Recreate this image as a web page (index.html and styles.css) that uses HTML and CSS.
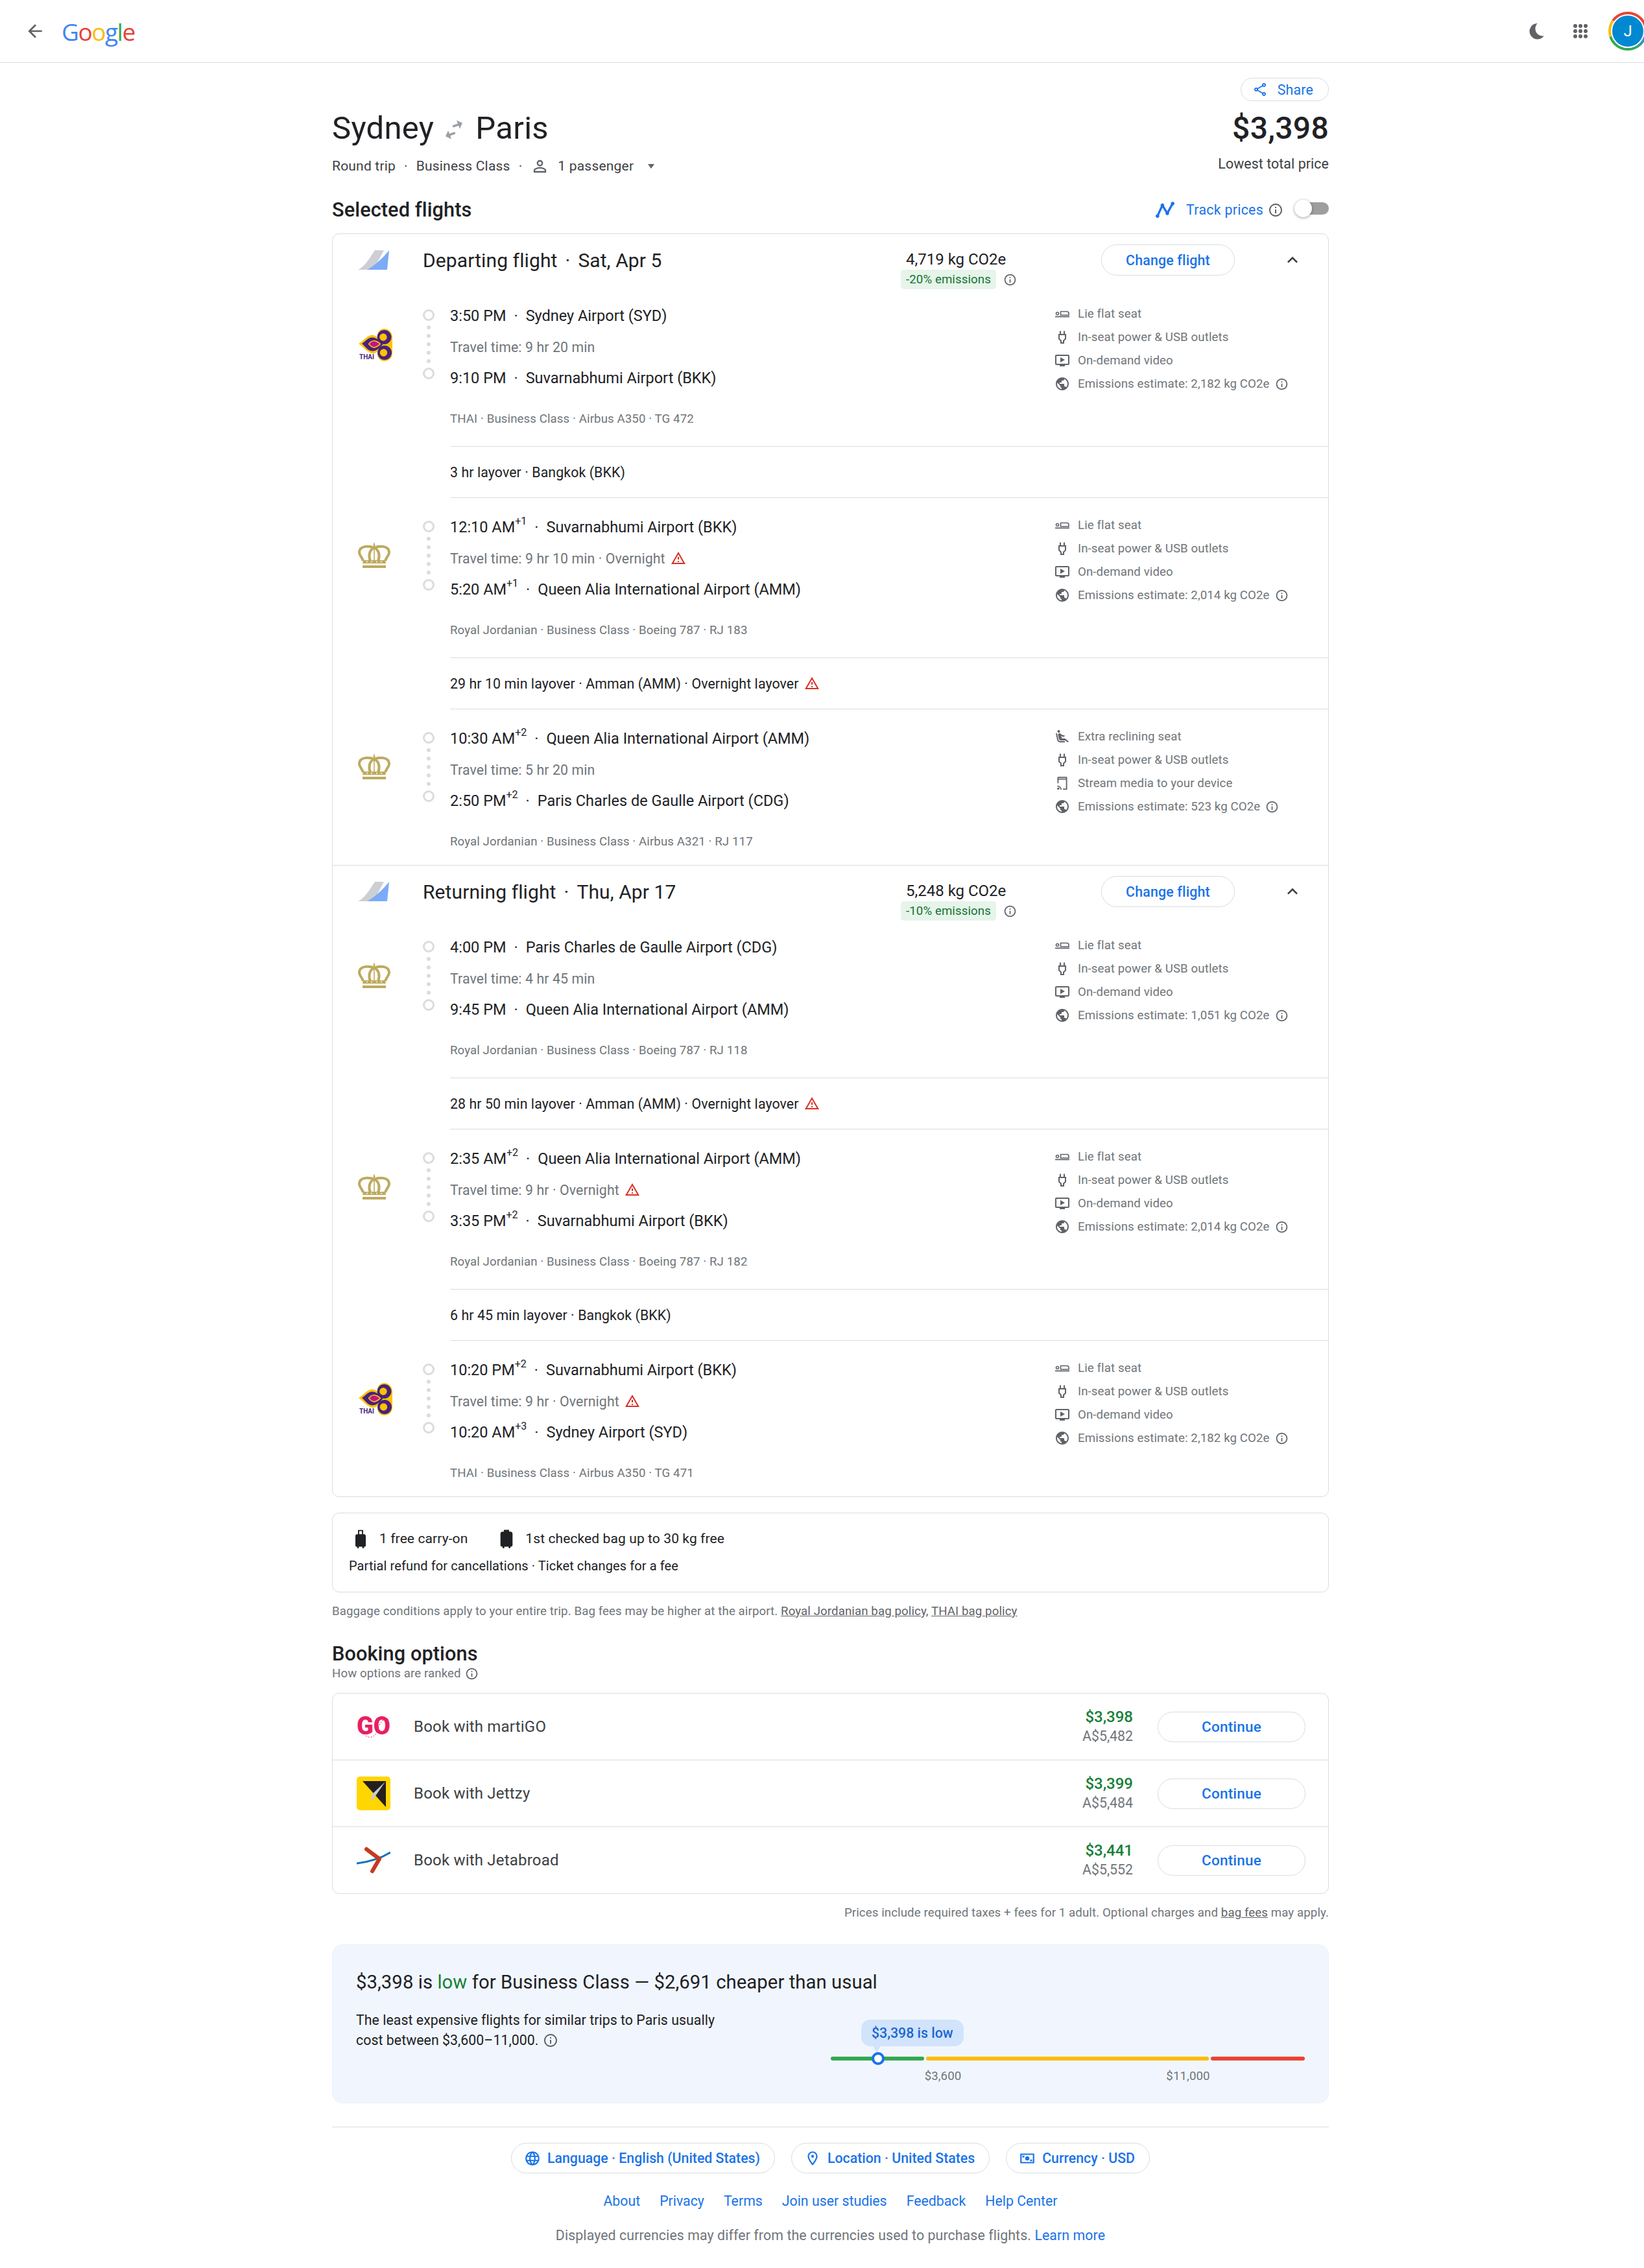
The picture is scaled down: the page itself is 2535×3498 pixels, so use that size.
FILE: index.html
```html
<!DOCTYPE html>
<html lang="en">
<head>
<meta charset="utf-8">
<title>Sydney to Paris - Google Flights</title>
<link rel="stylesheet" href="styles.css">
</head>
<body>
<svg class="defs" width="0" height="0" aria-hidden="true">
  <symbol id="i-back" viewBox="0 0 24 24"><path d="M20 11H7.83l5.59-5.59L12 4l-8 8 8 8 1.41-1.41L7.83 13H20v-2z"/></symbol>
  <symbol id="i-moon" viewBox="0 0 24 24"><path d="M12.5 3a9.2 9.2 0 1 0 7.5 14.6c-5.2.6-9.4-2.6-9.9-7.4-.3-3 .7-5.4 2.4-7.2z"/></symbol>
  <symbol id="i-apps" viewBox="0 0 24 24"><circle cx="4" cy="4" r="3"/><circle cx="12" cy="4" r="3"/><circle cx="20" cy="4" r="3"/><circle cx="4" cy="12" r="3"/><circle cx="12" cy="12" r="3"/><circle cx="20" cy="12" r="3"/><circle cx="4" cy="20" r="3"/><circle cx="12" cy="20" r="3"/><circle cx="20" cy="20" r="3"/></symbol>
  <symbol id="i-person" viewBox="0 0 24 24"><path d="M12 5.9c1.16 0 2.1.94 2.1 2.1s-.94 2.1-2.1 2.1S9.9 9.16 9.9 8s.94-2.1 2.1-2.1m0 9c2.97 0 6.1 1.46 6.1 2.1v1.1H5.9V17c0-.64 3.13-2.1 6.1-2.1M12 4C9.79 4 8 5.79 8 8s1.79 4 4 4 4-1.79 4-4-1.79-4-4-4zm0 9c-2.67 0-8 1.34-8 4v3h16v-3c0-2.66-5.33-4-8-4z"/></symbol>
  <symbol id="i-share" viewBox="0 0 24 24"><path fill-rule="evenodd" d="M18 16.08c-.76 0-1.44.3-1.96.77L8.91 12.7c.05-.23.09-.46.09-.7s-.04-.47-.09-.7l7.05-4.11c.54.5 1.25.81 2.04.81 1.66 0 3-1.34 3-3s-1.34-3-3-3-3 1.34-3 3c0 .24.04.47.09.7L8.04 9.81C7.5 9.31 6.79 9 6 9c-1.66 0-3 1.34-3 3s1.34 3 3 3c.79 0 1.5-.31 2.04-.81l7.12 4.16c-.05.21-.08.43-.08.65 0 1.61 1.31 2.92 2.92 2.92 1.61 0 2.92-1.31 2.92-2.92s-1.31-2.92-2.92-2.92zM18 4c.55 0 1 .45 1 1s-.45 1-1 1-1-.45-1-1 .45-1 1-1zM6 13c-.55 0-1-.45-1-1s.45-1 1-1 1 .45 1 1-.45 1-1 1zm12 7.02c-.55 0-1-.45-1-1s.45-1 1-1 1 .45 1 1-.45 1-1 1z"/></symbol>
  <symbol id="i-track" viewBox="0 0 24 24"><path d="M3.5 19 9 7l5.500 9L20.500 5" fill="none" stroke="currentColor" stroke-width="2.400"/><circle cx="3.500" cy="19" r="2"/><circle cx="9" cy="7" r="2"/><circle cx="14.500" cy="16" r="2"/><circle cx="20.500" cy="5" r="2"/></symbol>
  <symbol id="i-info" viewBox="0 0 24 24"><path d="M11 7h2v2h-2zm0 4h2v6h-2zm1-9C6.48 2 2 6.48 2 12s4.480 10 10 10 10-4.480 10-10S17.520 2 12 2zm0 18c-4.410 0-8-3.590-8-8s3.590-8 8-8 8 3.590 8 8-3.590 8-8 8z"/></symbol>
  <symbol id="i-up" viewBox="0 0 24 24"><path d="M12 8l-6 6 1.410 1.410L12 10.830l4.590 4.580L18 14z"/></symbol>
  <symbol id="i-warn" viewBox="0 0 24 24"><path d="M12 5.990 19.530 19H4.470L12 5.990M12 2 1 21h22L12 2zm1 14h-2v2h2v-2zm0-6h-2v4h2v-4z"/></symbol>
  <symbol id="i-swap" viewBox="0 0 24 24"><g transform="rotate(-20 12 12)"><path d="M21 9l-4-4v3h-5v2h5v3l4-4zM3 15l4 4v-3h5v-2H7v-3l-4 4z"/></g></symbol>
  <symbol id="i-seat" viewBox="0 0 24 24"><path d="M1 15.500h22v1.800H1z"/><circle cx="4.500" cy="11.500" r="2" fill="none" stroke="currentColor" stroke-width="1.600"/><path d="M9.500 14V8.500h9.500c2 0 3 1.300 3 2.800V14z" fill="none" stroke="currentColor" stroke-width="1.600"/></symbol>
  <symbol id="i-plug" viewBox="0 0 24 24"><path d="M9 2.500v5M15 2.500v5M7 8h10v6.500l-3 3V21h-4v-3.500l-3-3z" fill="none" stroke="currentColor" stroke-width="2"/></symbol>
  <symbol id="i-video" viewBox="0 0 24 24"><path d="M21 3H3c-1.110 0-2 .890-2 2v12c0 1.100.890 2 2 2h5v2h8v-2h5c1.100 0 1.990-.900 1.990-2L23 5c0-1.110-.900-2-2-2zm0 14H3V5h18v12zM16 11l-7 4V7z"/></symbol>
  <symbol id="i-globe" viewBox="0 0 24 24"><path d="M12 2C6.480 2 2 6.480 2 12s4.480 10 10 10 10-4.480 10-10S17.520 2 12 2zm-1 17.930c-3.950-.490-7-3.850-7-7.930 0-.620.080-1.210.210-1.790L9 15v1c0 1.100.900 2 2 2v1.930zm6.900-2.540c-.260-.810-1-1.390-1.900-1.390h-1v-3c0-.550-.450-1-1-1H8v-2h2c.550 0 1-.450 1-1V7h2c1.100 0 2-.900 2-2v-.410c2.930 1.190 5 4.060 5 7.410 0 2.080-.800 3.970-2.100 5.390z"/></symbol>
  <symbol id="i-recline" viewBox="0 0 24 24"><path d="M5.350 5.640c-.900-.640-1.120-1.880-.490-2.790.630-.900 1.880-1.120 2.790-.490.900.640 1.120 1.880.490 2.790-.640.900-1.880 1.120-2.790.490zM16 19H8.930c-1.480 0-2.740-1.080-2.960-2.540L4 7H2l1.990 9.760C4.370 19.200 6.470 21 8.940 21H16v-2zm.230-4h-4.880l-1.030-4.100c1.580.890 3.280 1.540 5.150 1.220V9.990c-1.630.310-3.440-.270-4.690-1.250L9.140 7.470c-.230-.180-.490-.300-.760-.380-.320-.090-.660-.120-.990-.060h-.020c-1.230.220-2.050 1.390-1.840 2.610l1.350 5.920C7.160 16.980 8.390 18 9.830 18h6.850l3.820 3 1.500-1.500-5.770-4.500z"/></symbol>
  <symbol id="i-stream" viewBox="0 0 24 24"><path d="M6 2h12c.800 0 1.500.700 1.500 1.500V22H13v-1.800h4.700V6.500H6.300V12H4.500V3.500C4.500 2.700 5.200 2 6 2zM6.300 3.800v1h11.400v-1z"/><circle cx="5.800" cy="20.300" r="1.700"/><path d="M4.500 16a6 6 0 0 1 6 6H12a7.500 7.500 0 0 0-7.500-7.500zM4.500 12.600V14a8 8 0 0 1 8 8h-2" fill="none"/><path d="M4.500 15.500v1.700a4.800 4.800 0 0 1 4.800 4.800H11a6.500 6.500 0 0 0-6.500-6.500z"/></symbol>
  <symbol id="i-carry" viewBox="0 0 24 24"><path d="M8 7h8c1.100 0 2 .900 2 2v11c0 .800-.500 1.300-1.200 1.300H7.200C6.500 21.300 6 20.800 6 20V9c0-1.100.900-2 2-2zM9 7V2h6v5h-1.400V3.400h-3.200V7zM8 21.300h2V23H8zM14 21.300h2V23h-2z"/></symbol>
  <symbol id="i-checked" viewBox="0 0 24 24"><path d="M7.500 4h9C17.900 4 19 5.100 19 6.500v13c0 1.100-.800 1.800-1.800 1.800H6.800c-1 0-1.800-.700-1.800-1.800v-13C5 5.100 6.100 4 7.500 4zM9 4V1.800h6V4zM7.500 21.300h2V23h-2zM14.500 21.300h2V23h-2z"/></symbol>
  <symbol id="i-lang" viewBox="0 0 24 24"><path d="M11.990 2C6.470 2 2 6.480 2 12s4.470 10 9.990 10C17.520 22 22 17.520 22 12S17.520 2 11.990 2zm6.930 6h-2.950c-.320-1.250-.780-2.450-1.380-3.560 1.840.630 3.370 1.910 4.330 3.560zM12 4.040c.830 1.200 1.480 2.530 1.910 3.960h-3.820c.430-1.430 1.080-2.760 1.910-3.960zM4.260 14C4.100 13.360 4 12.690 4 12s.100-1.360.260-2h3.380c-.080.660-.140 1.320-.140 2s.060 1.340.140 2H4.260zm.820 2h2.950c.320 1.250.780 2.450 1.380 3.560-1.840-.630-3.370-1.900-4.330-3.560zm2.950-8H5.080c.960-1.660 2.490-2.930 4.330-3.560C8.810 5.550 8.350 6.750 8.030 8zM12 19.960c-.830-1.200-1.480-2.530-1.910-3.960h3.820c-.430 1.430-1.080 2.760-1.910 3.960zM14.340 14H9.660c-.090-.660-.160-1.320-.160-2s.070-1.350.160-2h4.680c.090.650.160 1.320.160 2s-.070 1.340-.160 2zm.250 5.560c.600-1.110 1.060-2.310 1.380-3.560h2.950c-.960 1.650-2.490 2.930-4.330 3.560zM16.360 14c.080-.660.140-1.320.140-2s-.060-1.340-.140-2h3.380c.160.640.260 1.310.260 2s-.100 1.360-.260 2h-3.380z"/></symbol>
  <symbol id="i-pin" viewBox="0 0 24 24"><path d="M12 2C8.130 2 5 5.130 5 9c0 5.250 7 13 7 13s7-7.750 7-13c0-3.870-3.130-7-7-7zm0 2c2.760 0 5 2.240 5 5 0 2.880-2.880 7.190-5 9.880C9.920 16.210 7 11.850 7 9c0-2.760 2.240-5 5-5z"/><circle cx="12" cy="9" r="2"/></symbol>
  <symbol id="i-cash" viewBox="0 0 24 24"><path d="M3 5h18c.600 0 1 .400 1 1v12c0 .600-.400 1-1 1H3c-.600 0-1-.400-1-1V6c0-.600.400-1 1-1zm1 2v10h16V7z"/><circle cx="12" cy="12" r="3"/><path d="M5 8h3v2.500H5zM16 13.500h3V16h-3z"/></symbol>
  <symbol id="l-tail" viewBox="0 0 48 30"><path d="M0 30 C10 26 18 12 26 0 H40 L24 30 Z" fill="#cdcfd4"/><path d="M14 30 C26 24 38 12 48 0 L45 30 Z" fill="#7baaf7"/></symbol>
  <symbol id="l-thai" viewBox="0 0 50 48"><path d="M0 22 C6 19 11 11 18 9.500 C23 8.500 27 11 29 14 C26 8 30 0 38 0 C46 0 50 7 50 13 V36 C50 43 45 48 38 48 C30 48 26 40 29 33 C26 36 22 38 18 36 C11 33 6 26 0 22Z" fill="#fdc300"/><path d="M5 22 C10 19 13 14 19 13 C26 12 34 20 36 23 C33 27 26 34 19 33 C13 32 10 26 5 22Z" fill="#46227d"/><circle cx="38" cy="12.500" r="10.500" fill="#46227d"/><circle cx="38.500" cy="35.500" r="10.500" fill="#46227d"/><circle cx="36.500" cy="12.500" r="5.500" fill="#fdc300"/><circle cx="37" cy="35.500" r="5.500" fill="#fdc300"/><path d="M14 22.500 C17 19 20 17 23 17 C27 17.500 31 20 33 22.500 C31 25 27 28 23 28.500 C20 28.500 17 26 14 22.500Z" fill="#fdc300"/><path d="M16 22.500 C18 20 21 18.500 23 18.500 C26 19 29 21 31 22.500 C29 24 26 26.500 23 27 C21 27 18 25 16 22.500Z" fill="#c4128c"/></symbol>
  <symbol id="l-crown" viewBox="0 0 52 42"><g fill="none" stroke="#bdaa5e" stroke-width="4"><path d="M26 9C17 5 4 6 3 15c-.5 5 4 8 6 14"/><path d="M26 9c9-4 22-3 23 6 .5 5-4 8-6 14"/><path d="M26 9c-8 3-9 13-6 20M26 9c8 3 9 13 6 20"/></g><path d="M26 0l1.800 6h-1v24h-1.600V6h-1zM9 28h34l1 5H8zM8 36h36v4H8z" fill="#bdaa5e"/><g fill="#fff"><circle cx="15" cy="30.500" r="1"/><circle cx="22" cy="30.500" r="1"/><circle cx="30" cy="30.500" r="1"/><circle cx="37" cy="30.500" r="1"/></g></symbol>
  <symbol id="l-jettzy" viewBox="0 0 52 52"><rect width="52" height="52" rx="5" fill="#ffd600"/><path d="M9 7h36v40z" fill="#231f20"/><path d="M44 8 23 28v10l8-11z" fill="#c9c9c9"/></symbol>
  <symbol id="l-jetabroad" viewBox="0 0 52 52"><path d="M0 31 C16 29 36 24 52 14" fill="none" stroke="#1273bd" stroke-width="3"/><path d="M15 9 35 24 24 43" fill="none" stroke="#c8391f" stroke-width="6" stroke-linecap="round" stroke-linejoin="round"/></symbol>
</svg>

<div class="page">
  <header class="topbar">
    <div class="top-left">
      <svg class="ico top-ico"><use href="#i-back"/></svg>
      <a class="logo"><span class="g-b">G</span><span class="g-r">o</span><span class="g-y">o</span><span class="g-b">g</span><span class="g-g">l</span><span class="g-r">e</span></a>
    </div>
    <div class="top-right">
      <svg class="ico top-ico"><use href="#i-moon"/></svg>
      <svg class="ico apps"><use href="#i-apps"/></svg>
      <div class="avatar"><span>J</span></div>
    </div>
  </header>

  <main class="main">
    <section class="summary">
      <div class="summary-left">
        <h1 class="route"><span>Sydney</span><svg class="ico swap"><use href="#i-swap"/></svg><span>Paris</span></h1>
        <div class="trip">
          <span>Round trip</span><span class="sep">·</span><span>Business Class</span><span class="sep">·</span>
          <svg class="ico person"><use href="#i-person"/></svg><span>1 passenger</span><span class="caret"></span>
        </div>
      </div>
      <div class="summary-right">
        <a class="chip share"><svg class="ico"><use href="#i-share"/></svg>Share</a>
        <div class="total">$3,398</div>
        <div class="lowest">Lowest total price</div>
      </div>
    </section>

    <div class="selected-head">
      <h2>Selected flights</h2>
      <div class="track">
        <svg class="ico track-ico"><use href="#i-track"/></svg><span>Track prices</span>
        <svg class="ico info"><use href="#i-info"/></svg>
        <span class="toggle"><span class="knob"></span></span>
      </div>
    </div>

    <section class="card flights">
      <div class="way">
        <div class="way-head">
          <svg class="tail"><use href="#l-tail"/></svg>
          <div class="way-title">Departing flight<span class="dot">·</span>Sat, Apr 5</div>
          <div class="co2">
            <div class="co2-num">4,719 kg CO2e</div>
            <div class="co2-tag"><span class="tag">-20% emissions</span><svg class="ico info"><use href="#i-info"/></svg></div>
          </div>
          <a class="btn change">Change flight</a>
          <svg class="ico chev"><use href="#i-up"/></svg>
        </div>

        <div class="leg">
          <svg class="alogo"><use href="#l-thai"/></svg><span class="thai-word">THAI</span>
          <div class="path"><i class="ring"></i><i class="pip"></i><i class="pip"></i><i class="pip"></i><i class="pip"></i><i class="pip"></i><i class="ring"></i></div>
          <div class="times">
            <div class="time">3:50 PM<span class="dot">·</span>Sydney Airport (SYD)</div>
            <div class="travel">Travel time: 9 hr 20 min</div>
            <div class="time">9:10 PM<span class="dot">·</span>Suvarnabhumi Airport (BKK)</div>
            <div class="airline">THAI · Business Class · Airbus A350 · TG 472</div>
          </div>
          <ul class="amen">
            <li><svg class="ico"><use href="#i-seat"/></svg>Lie flat seat</li>
            <li><svg class="ico"><use href="#i-plug"/></svg>In-seat power &amp; USB outlets</li>
            <li><svg class="ico"><use href="#i-video"/></svg>On-demand video</li>
            <li><svg class="ico"><use href="#i-globe"/></svg>Emissions estimate: 2,182 kg CO2e<svg class="ico info"><use href="#i-info"/></svg></li>
          </ul>
        </div>
        <div class="layover">3 hr layover · Bangkok (BKK)</div>

        <div class="leg">
          <svg class="alogo crown"><use href="#l-crown"/></svg>
          <div class="path"><i class="ring"></i><i class="pip"></i><i class="pip"></i><i class="pip"></i><i class="pip"></i><i class="pip"></i><i class="ring"></i></div>
          <div class="times">
            <div class="time">12:10 AM<sup>+1</sup><span class="dot">·</span>Suvarnabhumi Airport (BKK)</div>
            <div class="travel">Travel time: 9 hr 10 min · Overnight<svg class="ico warn"><use href="#i-warn"/></svg></div>
            <div class="time">5:20 AM<sup>+1</sup><span class="dot">·</span>Queen Alia International Airport (AMM)</div>
            <div class="airline">Royal Jordanian · Business Class · Boeing 787 · RJ 183</div>
          </div>
          <ul class="amen">
            <li><svg class="ico"><use href="#i-seat"/></svg>Lie flat seat</li>
            <li><svg class="ico"><use href="#i-plug"/></svg>In-seat power &amp; USB outlets</li>
            <li><svg class="ico"><use href="#i-video"/></svg>On-demand video</li>
            <li><svg class="ico"><use href="#i-globe"/></svg>Emissions estimate: 2,014 kg CO2e<svg class="ico info"><use href="#i-info"/></svg></li>
          </ul>
        </div>
        <div class="layover">29 hr 10 min layover · Amman (AMM) · Overnight layover<svg class="ico warn"><use href="#i-warn"/></svg></div>

        <div class="leg last">
          <svg class="alogo crown"><use href="#l-crown"/></svg>
          <div class="path"><i class="ring"></i><i class="pip"></i><i class="pip"></i><i class="pip"></i><i class="pip"></i><i class="pip"></i><i class="ring"></i></div>
          <div class="times">
            <div class="time">10:30 AM<sup>+2</sup><span class="dot">·</span>Queen Alia International Airport (AMM)</div>
            <div class="travel">Travel time: 5 hr 20 min</div>
            <div class="time">2:50 PM<sup>+2</sup><span class="dot">·</span>Paris Charles de Gaulle Airport (CDG)</div>
            <div class="airline">Royal Jordanian · Business Class · Airbus A321 · RJ 117</div>
          </div>
          <ul class="amen">
            <li><svg class="ico"><use href="#i-recline"/></svg>Extra reclining seat</li>
            <li><svg class="ico"><use href="#i-plug"/></svg>In-seat power &amp; USB outlets</li>
            <li><svg class="ico"><use href="#i-stream"/></svg>Stream media to your device</li>
            <li><svg class="ico"><use href="#i-globe"/></svg>Emissions estimate: 523 kg CO2e<svg class="ico info"><use href="#i-info"/></svg></li>
          </ul>
        </div>
      </div>

      <div class="way">
        <div class="way-head">
          <svg class="tail"><use href="#l-tail"/></svg>
          <div class="way-title">Returning flight<span class="dot">·</span>Thu, Apr 17</div>
          <div class="co2">
            <div class="co2-num">5,248 kg CO2e</div>
            <div class="co2-tag"><span class="tag">-10% emissions</span><svg class="ico info"><use href="#i-info"/></svg></div>
          </div>
          <a class="btn change">Change flight</a>
          <svg class="ico chev"><use href="#i-up"/></svg>
        </div>

        <div class="leg">
          <svg class="alogo crown"><use href="#l-crown"/></svg>
          <div class="path"><i class="ring"></i><i class="pip"></i><i class="pip"></i><i class="pip"></i><i class="pip"></i><i class="pip"></i><i class="ring"></i></div>
          <div class="times">
            <div class="time">4:00 PM<span class="dot">·</span>Paris Charles de Gaulle Airport (CDG)</div>
            <div class="travel">Travel time: 4 hr 45 min</div>
            <div class="time">9:45 PM<span class="dot">·</span>Queen Alia International Airport (AMM)</div>
            <div class="airline">Royal Jordanian · Business Class · Boeing 787 · RJ 118</div>
          </div>
          <ul class="amen">
            <li><svg class="ico"><use href="#i-seat"/></svg>Lie flat seat</li>
            <li><svg class="ico"><use href="#i-plug"/></svg>In-seat power &amp; USB outlets</li>
            <li><svg class="ico"><use href="#i-video"/></svg>On-demand video</li>
            <li><svg class="ico"><use href="#i-globe"/></svg>Emissions estimate: 1,051 kg CO2e<svg class="ico info"><use href="#i-info"/></svg></li>
          </ul>
        </div>
        <div class="layover">28 hr 50 min layover · Amman (AMM) · Overnight layover<svg class="ico warn"><use href="#i-warn"/></svg></div>

        <div class="leg">
          <svg class="alogo crown"><use href="#l-crown"/></svg>
          <div class="path"><i class="ring"></i><i class="pip"></i><i class="pip"></i><i class="pip"></i><i class="pip"></i><i class="pip"></i><i class="ring"></i></div>
          <div class="times">
            <div class="time">2:35 AM<sup>+2</sup><span class="dot">·</span>Queen Alia International Airport (AMM)</div>
            <div class="travel">Travel time: 9 hr · Overnight<svg class="ico warn"><use href="#i-warn"/></svg></div>
            <div class="time">3:35 PM<sup>+2</sup><span class="dot">·</span>Suvarnabhumi Airport (BKK)</div>
            <div class="airline">Royal Jordanian · Business Class · Boeing 787 · RJ 182</div>
          </div>
          <ul class="amen">
            <li><svg class="ico"><use href="#i-seat"/></svg>Lie flat seat</li>
            <li><svg class="ico"><use href="#i-plug"/></svg>In-seat power &amp; USB outlets</li>
            <li><svg class="ico"><use href="#i-video"/></svg>On-demand video</li>
            <li><svg class="ico"><use href="#i-globe"/></svg>Emissions estimate: 2,014 kg CO2e<svg class="ico info"><use href="#i-info"/></svg></li>
          </ul>
        </div>
        <div class="layover">6 hr 45 min layover · Bangkok (BKK)</div>

        <div class="leg last">
          <svg class="alogo"><use href="#l-thai"/></svg><span class="thai-word">THAI</span>
          <div class="path"><i class="ring"></i><i class="pip"></i><i class="pip"></i><i class="pip"></i><i class="pip"></i><i class="pip"></i><i class="ring"></i></div>
          <div class="times">
            <div class="time">10:20 PM<sup>+2</sup><span class="dot">·</span>Suvarnabhumi Airport (BKK)</div>
            <div class="travel">Travel time: 9 hr · Overnight<svg class="ico warn"><use href="#i-warn"/></svg></div>
            <div class="time">10:20 AM<sup>+3</sup><span class="dot">·</span>Sydney Airport (SYD)</div>
            <div class="airline">THAI · Business Class · Airbus A350 · TG 471</div>
          </div>
          <ul class="amen">
            <li><svg class="ico"><use href="#i-seat"/></svg>Lie flat seat</li>
            <li><svg class="ico"><use href="#i-plug"/></svg>In-seat power &amp; USB outlets</li>
            <li><svg class="ico"><use href="#i-video"/></svg>On-demand video</li>
            <li><svg class="ico"><use href="#i-globe"/></svg>Emissions estimate: 2,182 kg CO2e<svg class="ico info"><use href="#i-info"/></svg></li>
          </ul>
        </div>
      </div>
    </section>

    <section class="card bags">
      <div class="bag-row">
        <svg class="ico"><use href="#i-carry"/></svg><span class="bag-a">1 free carry-on</span>
        <svg class="ico"><use href="#i-checked"/></svg><span>1st checked bag up to 30 kg free</span>
      </div>
      <div class="bag-note">Partial refund for cancellations · Ticket changes for a fee</div>
    </section>
    <p class="bag-legal">Baggage conditions apply to your entire trip. Bag fees may be higher at the airport. <a>Royal Jordanian bag policy,</a> <a>THAI bag policy</a></p>

    <h2 class="book-title">Booking options</h2>
    <div class="ranked">How options are ranked<svg class="ico info"><use href="#i-info"/></svg></div>

    <section class="card options">
      <div class="option">
        <svg class="opt-logo martigo" viewBox="0 0 52 52"><path d="M14 40c8 6 16 0 19-11 3-10 8-16 16-14" fill="none" stroke="#e91e63" stroke-width="1" stroke-dasharray="2 2"/><text x="26" y="38" text-anchor="middle" textLength="52" lengthAdjust="spacingAndGlyphs">GO</text></svg>
        <div class="opt-name">Book with martiGO</div>
        <div class="opt-price"><b>$3,398</b><span>A$5,482</span></div>
        <a class="btn cont">Continue</a>
      </div>
      <div class="option">
        <svg class="opt-logo"><use href="#l-jettzy"/></svg>
        <div class="opt-name">Book with Jettzy</div>
        <div class="opt-price"><b>$3,399</b><span>A$5,484</span></div>
        <a class="btn cont">Continue</a>
      </div>
      <div class="option">
        <svg class="opt-logo"><use href="#l-jetabroad"/></svg>
        <div class="opt-name">Book with Jetabroad</div>
        <div class="opt-price"><b>$3,441</b><span>A$5,552</span></div>
        <a class="btn cont">Continue</a>
      </div>
    </section>
    <p class="price-note">Prices include required taxes + fees for 1 adult. Optional charges and <a>bag fees</a> may apply.</p>

    <section class="insight">
      <h3>$3,398 is <em>low</em> for Business Class — $2,691 cheaper than usual</h3>
      <div class="insight-body">
        <p class="insight-text">The least expensive flights for similar trips to Paris usually cost between $3,600–11,000.<svg class="ico info"><use href="#i-info"/></svg></p>
        <div class="meter">
          <div class="bubble">$3,398 is low</div>
          <div class="bars"><i class="bar green"></i><i class="bar yellow"></i><i class="bar red"></i><i class="handle"></i></div>
          <div class="scale"><span>$3,600</span><span>$11,000</span></div>
        </div>
      </div>
    </section>

    <footer class="foot">
      <div class="chips">
        <a class="chip"><svg class="ico"><use href="#i-lang"/></svg>Language · English (United States)</a>
        <a class="chip"><svg class="ico"><use href="#i-pin"/></svg>Location · United States</a>
        <a class="chip"><svg class="ico"><use href="#i-cash"/></svg>Currency · USD</a>
      </div>
      <nav class="links"><a>About</a><a>Privacy</a><a>Terms</a><a>Join user studies</a><a>Feedback</a><a>Help Center</a></nav>
      <p class="disclaimer">Displayed currencies may differ from the currencies used to purchase flights. <a>Learn more</a></p>
    </footer>
  </main>
</div>
</body>
</html>
```
FILE: styles.css
```css
* { box-sizing: border-box; }
html, body { margin: 0; padding: 0; background: #fff; }
body { font-family: Roboto, "Liberation Sans", sans-serif; color: #202124; }
a { color: inherit; }
h1, h2, h3, p, ul { margin: 0; padding: 0; font-weight: 400; }
ul { list-style: none; }
.defs { position: absolute; }
.page { width: 100%; height: 3498px; overflow: hidden; }
.ico { width: 24px; height: 24px; fill: currentColor; flex: none; display: block; }

.topbar { height: 97px; border-bottom: 1px solid #dadce0; display: flex; justify-content: space-between; align-items: center; padding: 0 0 0 38px; }
.top-left, .top-right { display: flex; align-items: center; }
.top-ico { width: 32px; height: 32px; color: #5f6368; }
.logo { margin-left: 25px; font: 400 37px/1 "Open Sans", sans-serif; letter-spacing: -1.5px; }
.g-b { color: #4285f4; } .g-r { color: #ea4335; } .g-y { color: #fbbc05; } .g-g { color: #34a853; }
.top-right { margin-right: -5px; }
.apps { width: 24px; height: 24px; margin: 0 31px 0 39px; color: #5f6368; }
.avatar { width: 60px; height: 60px; border-radius: 50%; padding: 4px; background: conic-gradient(#ea4335 0 25%, #4285f4 25% 30%, #34a853 45% 70%, #fbbc05 70% 85%, #ea4335 85%); display: flex; }
.avatar span { flex: 1; border-radius: 50%; background: #0288d1; color: #fff; border: 2px solid #fff; font-size: 24px; display: flex; align-items: center; justify-content: center; }

.main { width: 1537px; margin-left: 512px; }
.summary { display: flex; justify-content: space-between; height: 204px; }
.summary-left { padding-top: 71px; }
.route { display: flex; align-items: center; font-size: 49px; line-height: 60px; letter-spacing: .3px; height: 60px; }
.swap { width: 42px; height: 42px; color: #9aa0a6; margin: 4px 12px 0 10px; }
.trip { display: flex; align-items: center; margin-top: 12px; height: 32px; font-size: 21px; letter-spacing: .2px; color: #3c4043; }
.sep { margin: 0 13px; }
.person { width: 29px; height: 29px; color: #5f6368; margin: 0 13px 0 0; }
.caret { width: 0; height: 0; border: 5.500px solid transparent; border-top: 7px solid #5f6368; border-bottom: 0; margin-left: 22px; }
.summary-right { padding-top: 23px; display: flex; flex-direction: column; align-items: flex-end; }
.chip { display: inline-flex; align-items: center; border: 1px solid #dadce0; border-radius: 24px; color: #1a73e8; }
.share { height: 36px; padding: 0 23px 0 17px; font-size: 21.300px; letter-spacing: .2px; }
.share .ico { width: 24px; height: 24px; margin-right: 15px; }
.total { font-size: 48px; line-height: 56px; margin-top: 14px; letter-spacing: .3px; font-weight: 500; }
.lowest { font-size: 21.300px; line-height: 28px; margin-top: 13px; letter-spacing: .1px; color: #3c4043; }

.selected-head { display: flex; justify-content: space-between; align-items: center; height: 45px; }
.selected-head h2 { font-size: 30.700px; font-weight: 500; letter-spacing: .1px; }
.track { display: flex; align-items: center; color: #1a73e8; font-size: 21.300px; letter-spacing: .3px; }
.track-ico { width: 33px; height: 33px; margin-right: 16px; }
.track .info { width: 24px; height: 24px; color: #5f6368; margin: 0 18px 0 7px; }
.toggle { width: 52px; height: 19px; background: #9e9e9e; border-radius: 10px; margin-bottom: 5px; position: relative; display: block; }
.knob { position: absolute; left: -1px; top: -4px; width: 27px; height: 27px; background: #fff; border-radius: 50%; box-shadow: 0 1px 4px rgba(0,0,0,.4); }

.card { border: 1px solid #dadce0; border-radius: 11px; }
.flights { margin-top: 14px; }
.way + .way { border-top: 1px solid #dadce0; }
.way-head { height: 80px; display: flex; align-items: center; padding-left: 39px; }
.tail { width: 48px; height: 30px; margin-right: 52px; }
.way-title { font-size: 30px; letter-spacing: .1px; width: 737px; }
.way-title .dot { margin: 0 12px; }
.co2 { width: 309px; align-self: flex-start; padding-top: 26px; }
.co2-num { font-size: 24px; line-height: 27px; padding-left: 8px; }
.co2-tag { display: flex; align-items: center; gap: 11px; margin-top: 2px; }
.tag { background: #e6f4ea; color: #137333; font-size: 18.670px; line-height: 30px; padding: 0 8px; border-radius: 5px; letter-spacing: .1px; }
.co2-tag .info { width: 21px; height: 21px; color: #5f6368; }
.btn { display: flex; align-items: center; justify-content: center; border: 1px solid #dadce0; border-radius: 25px; color: #1a73e8; font-size: 21.300px; font-weight: 500; letter-spacing: .2px; }
.change { width: 206px; height: 48px; }
.chev { width: 32px; height: 32px; margin-left: 73px; color: #3c4043; }

.leg { height: 247px; display: grid; grid-template-columns: 1fr 422px; position: relative; }
.leg.last { height: 241px; }
.alogo { position: absolute; left: 40px; top: 66px; width: 52px; height: 50px; }
.alogo.crown { height: 42px; top: 69px; left: 38px; }
.thai-word { position: absolute; left: 41px; top: 104px; font-size: 10px; font-weight: 700; color: #46227d; }
.path { position: absolute; left: 138px; top: 36px; width: 20px; display: flex; flex-direction: column; align-items: center; gap: 7px; }
.ring { width: 18px; height: 18px; border: 3px solid #dadce0; border-radius: 50%; display: block; background: #fff; }
.pip { width: 6px; height: 6px; background: #dadce0; border-radius: 50%; display: block; }
.times { margin-left: 181px; padding-top: 22px; }
.time { height: 48px; display: flex; align-items: center; font-size: 23.500px; }
.time .dot { margin: 0 12px; }
.time sup { font-size: 16px; line-height: 1; align-self: flex-start; margin-top: 7px; }
.travel { height: 48px; display: flex; align-items: center; font-size: 21.300px; letter-spacing: .1px; color: #70757a; }
.warn { width: 24px; height: 24px; color: #d93025; margin-left: 8px; }
.airline { margin-top: 22px; height: 34px; display: flex; align-items: center; font-size: 18.670px; letter-spacing: .1px; color: #70757a; }
.amen { padding-top: 25px; }
.amen li { height: 36px; display: flex; align-items: center; font-size: 18.670px; letter-spacing: .1px; color: #70757a; }
.amen .ico { width: 24px; height: 24px; margin-right: 12px; color: #5f6368; }
.amen .info { width: 21px; height: 21px; margin: 0 0 0 8px; }
.layover { margin-left: 181px; height: 79px; border-top: 1px solid #dadce0; box-shadow: 0 1px 0 #dadce0; display: flex; align-items: center; font-size: 21.300px; letter-spacing: .1px; }

.bags { margin-top: 24px; height: 123px; padding: 24px 0 0 25px; }
.bag-row { display: flex; align-items: center; height: 30px; font-size: 21px; letter-spacing: .1px; }
.bag-row .ico { width: 32px; height: 32px; margin-left: 2px; margin-right: 13px; }
.bag-a { margin-right: 42px; }
.bag-note { margin-top: 12px; height: 30px; line-height: 30px; font-size: 20px; letter-spacing: .1px; }
.bag-legal { margin-top: 18px; font-size: 18.670px; line-height: 22px; letter-spacing: .1px; color: #70757a; }
.bag-legal a, .price-note a { text-decoration: underline; color: #5f6368; }

.book-title { font-size: 30.700px; font-weight: 500; letter-spacing: .1px; margin-top: 35px; line-height: 40px; }
.ranked { display: flex; align-items: center; font-size: 18.670px; letter-spacing: .1px; color: #70757a; height: 20px; }
.ranked .info { width: 21px; height: 21px; color: #5f6368; margin-left: 6px; }
.options { margin-top: 20px; }
.option { height: 103px; display: flex; align-items: center; padding: 0 35px 0 37px; border-top: 1px solid #dadce0; }
.option:first-child { border-top: 0; height: 102px; }
.opt-logo { width: 52px; height: 52px; flex: none; }
.martigo text { font: 900 38px Roboto, sans-serif; fill: #e91e63; }
.opt-name { margin-left: 36px; flex: 1; font-size: 24px; letter-spacing: .2px; color: #3c4043; }
.opt-price { display: flex; flex-direction: column; align-items: flex-end; line-height: 30px; font-size: 24px; margin-right: 38px; }
.opt-price b { color: #188038; font-weight: 500; }
.opt-price span { color: #70757a; font-size: 21.300px; }
.cont { width: 228px; height: 47px; font-size: 22.500px; }
.price-note { text-align: right; margin-top: 18px; font-size: 18.670px; line-height: 22px; letter-spacing: .1px; color: #70757a; }

.insight { margin-top: 38px; height: 245px; background: #f1f6fe; border: 1px solid #e8f0fe; border-radius: 16px; padding: 38px 36px 0 36px; }
.insight h3 { font-size: 29.300px; line-height: 38px; letter-spacing: .05px; }
.insight em { font-style: normal; color: #188038; }
.insight-body { display: flex; justify-content: space-between; margin-top: 24px; }
.insight-text { width: 590px; font-size: 21.300px; line-height: 31px; letter-spacing: .05px; }
.insight-text .info { display: inline-block; vertical-align: -5px; width: 24px; height: 24px; margin-left: 7px; color: #5f6368; }
.meter { width: 731px; position: relative; }
.bubble { position: absolute; left: 47px; top: 15px; height: 41px; line-height: 41px; padding: 0 16px; background: #d2e3fc; color: #1967d2; border-radius: 14px; font-size: 21.300px; white-space: nowrap; font-weight: 500; }
.bubble::after { content: ""; position: absolute; left: 18px; top: 40px; border: 6px solid transparent; border-top: 11px solid #d2e3fc; border-bottom: 0; }
.bars { position: absolute; left: 0; top: 72px; width: 731px; display: flex; gap: 3px; }
.bar { display: block; height: 6px; border-radius: 3px; }
.green { width: 144px; background: #34a853; }
.yellow { width: 436px; background: #fbbc04; }
.red { flex: 1; background: #ea4335; }
.handle { position: absolute; left: 63px; top: -7px; width: 20px; height: 20px; background: #fff; border: 4px solid #1a73e8; border-radius: 50%; }
.scale { position: absolute; top: 91px; left: 0; width: 731px; font-size: 18.670px; line-height: 22px; letter-spacing: .1px; color: #70757a; }
.scale span { position: absolute; transform: translateX(-50%); white-space: nowrap; }
.scale span:first-child { left: 173px; }
.scale span:last-child { left: 551px; }

.foot { margin-top: 36px; border-top: 1px solid #dadce0; padding-top: 24px; display: flex; flex-direction: column; align-items: center; }
.chips { display: flex; gap: 25px; }
.chips .chip { height: 47px; padding: 0 22px; font-size: 21.300px; font-weight: 500; }
.chips .ico { width: 26px; height: 26px; margin-right: 10px; margin-left: -3px; }
.links { display: flex; gap: 30px; margin-top: 30px; color: #1a73e8; font-size: 21.300px; line-height: 26px; }
.disclaimer { margin-top: 27px; font-size: 21.300px; line-height: 26px; letter-spacing: .1px; color: #70757a; }
.disclaimer a { color: #1a73e8; }
```
